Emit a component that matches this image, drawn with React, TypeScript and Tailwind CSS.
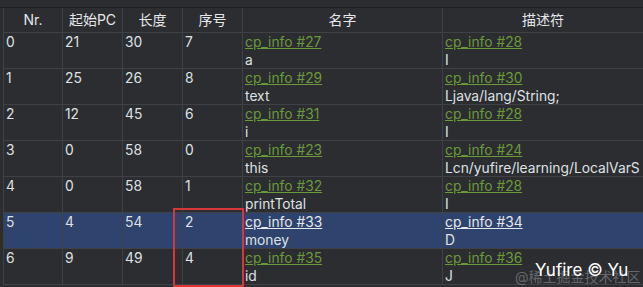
import React from "react";

type Row = { nr: string; pc: string; len: string; idx: string; nameRef: string; name: string; descRef: string; desc: string };

const rows: Row[] = [
  { nr: "0", pc: "21", len: "30", idx: "7", nameRef: "cp_info #27", name: "a", descRef: "cp_info #28", desc: "I" },
  { nr: "1", pc: "25", len: "26", idx: "8", nameRef: "cp_info #29", name: "text", descRef: "cp_info #30", desc: "Ljava/lang/String;" },
  { nr: "2", pc: "12", len: "45", idx: "6", nameRef: "cp_info #31", name: "i", descRef: "cp_info #28", desc: "I" },
  { nr: "3", pc: "0", len: "58", idx: "0", nameRef: "cp_info #23", name: "this", descRef: "cp_info #24", desc: "Lcn/yufire/learning/LocalVarS" },
  { nr: "4", pc: "0", len: "58", idx: "1", nameRef: "cp_info #32", name: "printTotal", descRef: "cp_info #28", desc: "I" },
  { nr: "5", pc: "4", len: "54", idx: "2", nameRef: "cp_info #33", name: "money", descRef: "cp_info #34", desc: "D" },
  { nr: "6", pc: "9", len: "49", idx: "4", nameRef: "cp_info #35", name: "id", descRef: "cp_info #36", desc: "J" },
];

const font = { fontFamily: "Inter, 'Noto Sans CJK SC', sans-serif" };

export default function App() {
  return (
    <div className="relative w-[643px] h-[287px] overflow-hidden bg-[#2b2d30] text-[13.8px] text-[#dfe1e5]" style={font}>
      <div className="h-[8px] border-b border-[#1e1f22]" />
      <div className="ml-[3px] border-l border-[#3f4145]">
        <div className="flex h-[25px] border-b border-[#3f4145] bg-[#2b2d30] leading-[24px] text-[14px] text-[#e6e7ea]">
          <div className="w-[59px] text-center border-r border-[#3f4145]">Nr.</div>
          <div className="w-[60px] text-center border-r border-[#3f4145]">起始PC</div>
          <div className="w-[60px] text-center border-r border-[#3f4145]">长度</div>
          <div className="w-[60px] text-center border-r border-[#3f4145]">序号</div>
          <div className="w-[200px] text-center border-r border-[#3f4145]">名字</div>
          <div className="flex-1 text-center">描述符</div>
        </div>
        {rows.map((r) => {
          const sel = r.nr === "5";
          const link = sel ? "text-[#e6e7ea]" : "text-[#6a9a3a]";
          return (
            <div
              key={r.nr}
              className={`flex h-[36px] border-b border-[#3f4145] leading-[18px] ${sel ? "bg-[#2e436e]" : "bg-[#2b2d30]"}`}
            >
              <div className="w-[59px] pl-[2px] border-r border-[#3f4145]">{r.nr}</div>
              <div className="w-[60px] pl-[2px] border-r border-[#3f4145]">{r.pc}</div>
              <div className="w-[60px] pl-[2px] border-r border-[#3f4145]">{r.len}</div>
              <div className="w-[60px] pl-[2px] border-r border-[#3f4145]">{r.idx}</div>
              <div className="w-[200px] pl-[2px] border-r border-[#3f4145] whitespace-nowrap overflow-hidden">
                <div className={`underline ${link}`}>{r.nameRef}</div>
                <div>{r.name}</div>
              </div>
              <div className="flex-1 pl-[2px] whitespace-nowrap overflow-hidden">
                <div className={`underline ${link}`}>{r.descRef}</div>
                <div>{r.desc}</div>
              </div>
            </div>
          );
        })}
      </div>
      <div className="absolute left-[173px] top-[208px] w-[71px] h-[79px] border-2 border-[#d8363a]" />
      <div className="absolute left-[515px] top-[266px] text-[14px] text-[#8a8c90] opacity-60 whitespace-nowrap">@稀土掘金技术社区</div>
      <div className="absolute left-[535px] top-[258px] text-[17px] text-white whitespace-nowrap">Yufire © Yu</div>
    </div>
  );
}
